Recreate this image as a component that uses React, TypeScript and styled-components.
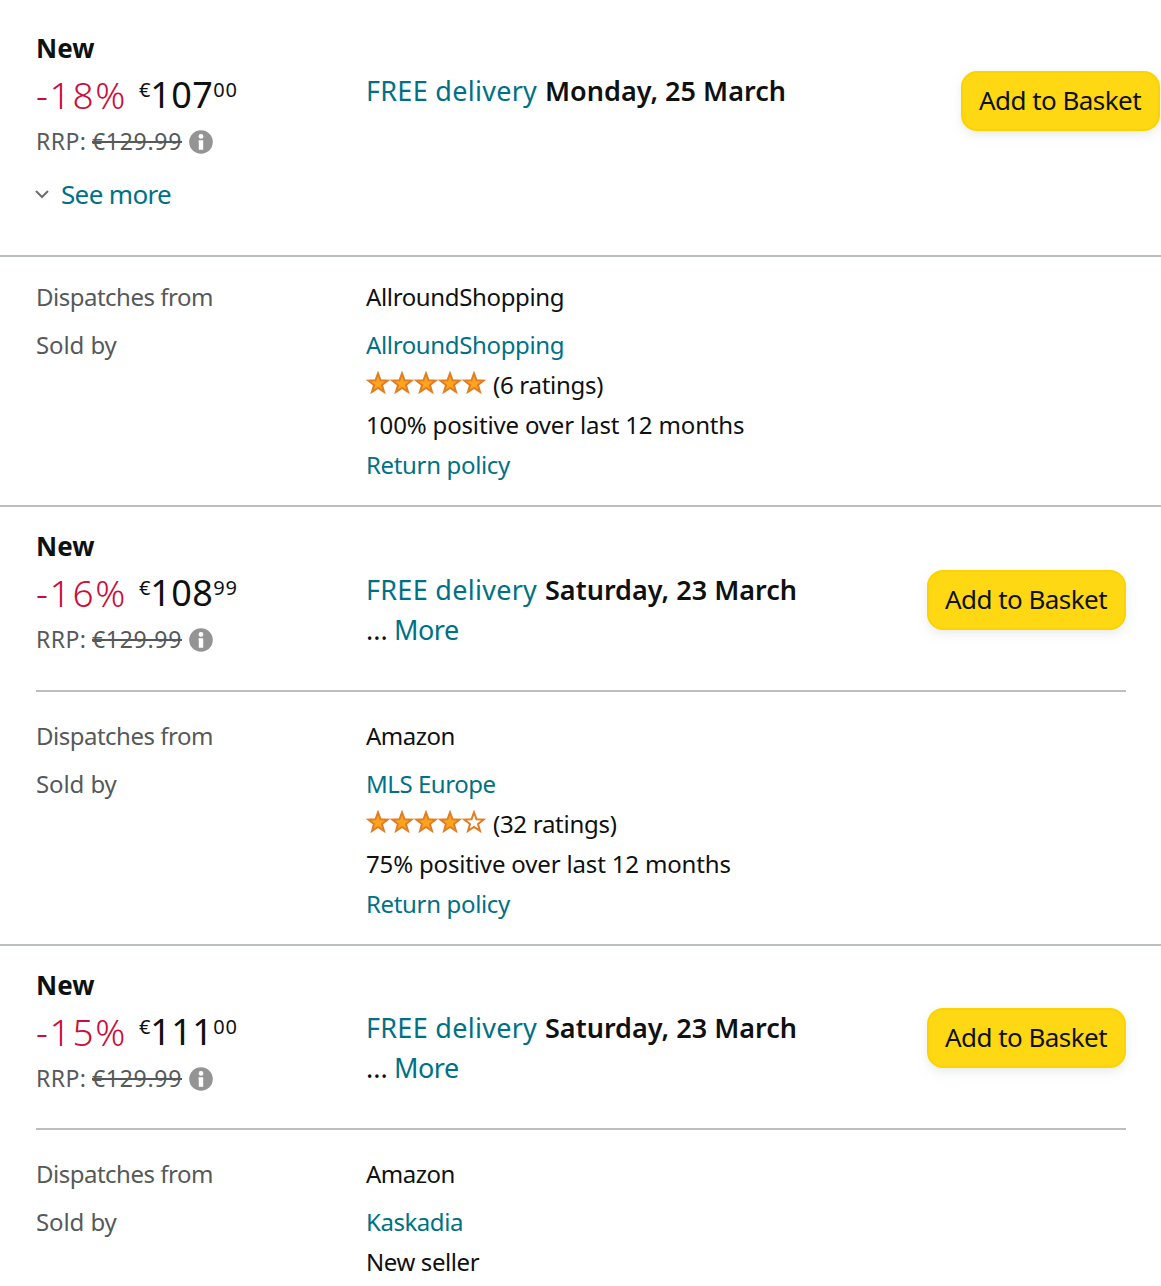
import React from 'react';
import styled, { createGlobalStyle } from 'styled-components';

const GlobalStyle = createGlobalStyle`
  * { box-sizing: border-box; }
  body {
    margin: 0;
    background: #fff;
    color: #0f1111;
    font-family: "Noto Sans", "Open Sans", sans-serif;
    overflow: hidden;
  }
`;

const Page = styled.main`
  width: 1161px;
  height: 1286px;
  overflow: hidden;
`;

const Offer = styled.section<{ $top: number }>`
  padding-top: ${p => p.$top}px;
`;

const Header = styled.div<{ $bottom: number; $wide?: boolean }>`
  display: grid;
  grid-template-columns: 330px 1fr auto;
  align-items: start;
  padding: 0 ${p => (p.$wide ? 1 : 35)}px ${p => p.$bottom}px 36px;
`;

const Rule = styled.hr<{ $inset?: boolean }>`
  height: 2px;
  border: 0;
  margin: 0 ${p => (p.$inset ? '35px 0 36px' : '0')};
  background: #bbbfbf;
`;

const Condition = styled.div`
  height: 40px;
  line-height: 40px;
  font-size: 26px;
  font-weight: 700;
`;

const PriceLine = styled.div`
  display: flex;
  height: 52px;
  line-height: 53px;
`;

const Discount = styled.span`
  width: 103px;
  font-size: 37px;
  font-weight: 300;
  letter-spacing: 1.7px;
  color: #cc0c39;
`;

const Small = styled.span`
  font-size: 20px;
  line-height: 44px;
  letter-spacing: 0.8px;
`;

const Whole = styled.span`
  margin-left: -1px;
  font-size: 36px;
  letter-spacing: 0.4px;
`;

const ListPrice = styled.div`
  display: flex;
  align-items: center;
  height: 43px;
  line-height: 43px;
  font-size: 23px;
  letter-spacing: 0.7px;
  color: #565959;
`;

const ListLabel = styled.span`
  width: 56px;
  letter-spacing: 0.4px;
`;

const Struck = styled.span`
  position: relative;
  width: 90px;
  margin-right: 7px;
  white-space: nowrap;

  &::after {
    content: "";
    position: absolute;
    left: 0;
    right: 0;
    top: 21px;
    height: 2px;
    background: #565959;
  }
`;

const SeeMore = styled.div`
  display: flex;
  align-items: center;
  gap: 12px;
  height: 40px;
  margin: 11px 0 0 -1px;
  line-height: 40px;
  font-size: 26px;
  letter-spacing: -0.65px;
  color: #007185;
`;

const Delivery = styled.div<{ $top: number }>`
  margin-top: ${p => p.$top}px;
  line-height: 40px;
  font-size: 27px;
  white-space: nowrap;
`;

const DeliveryLine = styled.div`
  display: flex;
`;

const FreeLink = styled.span`
  width: 179px;
  letter-spacing: 0.28px;
  color: #007185;
`;

const DeliveryDate = styled.span`
  font-weight: 600;
  letter-spacing: 0.02px;
`;

const Ellipsis = styled.span`
  width: 28px;
`;

const MoreLink = styled.span`
  letter-spacing: -0.5px;
  color: #007185;
`;

const BasketButton = styled.button<{ $top: number }>`
  width: 199px;
  height: 60px;
  margin-top: ${p => p.$top}px;
  padding: 0 1px 2px 0;
  border: 2px solid #fcd200;
  border-radius: 16px;
  background: #ffd814;
  box-shadow: 0 4px 10px rgba(213, 217, 217, 0.5);
  color: #0f1111;
  font-family: inherit;
  font-size: 26px;
  line-height: 54px;
  letter-spacing: -0.55px;
  white-space: nowrap;
`;

const Details = styled.div<{ $top: number }>`
  display: grid;
  grid-template-columns: 330px 1fr;
  row-gap: 8px;
  padding: ${p => p.$top}px 35px 20px 36px;
  font-size: 24px;
  line-height: 40px;
`;

const Label = styled.div<{ $track: number }>`
  height: 40px;
  letter-spacing: ${p => p.$track}px;
  color: #565959;
`;

const Line = styled.div<{ $track: number; $link?: boolean }>`
  height: 40px;
  letter-spacing: ${p => p.$track}px;
  color: ${p => (p.$link ? '#007185' : '#0f1111')};
`;

const RatingLine = styled.div`
  display: flex;
  height: 40px;
  letter-spacing: -0.28px;
`;

const StarStrip = styled.svg`
  display: block;
  width: 120px;
  height: 24px;
  margin: 6px 7px 0 0;
`;

const STAR = 'M12 2.4L14.5 9.3L21.6 9.6L16 14L18 20.9L12 17L6 20.9L8 14L2.400 9.6L9.5 9.3Z';

function Stars({ filled }: { filled: number }) {
  return (
    <StarStrip viewBox="0 0 120 24">
      {[0, 1, 2, 3, 4].map(i => (
        <path
          key={i}
          d={STAR}
          transform={`translate(${i * 24} 0)`}
          fill={i < filled ? '#ffa41c' : '#fff'}
          stroke="#e17d22"
          strokeWidth="2"
        />
      ))}
    </StarStrip>
  );
}

function InfoIcon() {
  return (
    <svg width="24" height="24" viewBox="0 0 24 24">
      <circle cx="12" cy="12" r="11.8" fill="#949494" />
      <circle cx="12" cy="6.4" r="2.4" fill="#fff" />
      <path d="M9.600 10.300h4.600v9.400h-4.400v-7.300h-.2z" fill="#fff" />
    </svg>
  );
}

function Chevron() {
  return (
    <svg width="14" height="10" viewBox="0 0 14 10">
      <path d="M1 2L7 8L13 2" fill="none" stroke="#6b6f6f" strokeWidth="2" />
    </svg>
  );
}

interface PriceProps {
  discount: string;
  whole: string;
  cents: string;
}

function Price({ discount, whole, cents }: PriceProps) {
  return (
    <>
      <Condition>New</Condition>
      <PriceLine>
        <Discount>{discount}</Discount>
        <Small>€</Small>
        <Whole>{whole}</Whole>
        <Small>{cents}</Small>
      </PriceLine>
      <ListPrice>
        <ListLabel>RRP:</ListLabel>
        <Struck>€129.99</Struck>
        <InfoIcon />
      </ListPrice>
    </>
  );
}

function DeliveryInfo({ date, top, more }: { date: string; top: number; more?: boolean }) {
  return (
    <Delivery $top={top}>
      <DeliveryLine>
        <FreeLink>FREE delivery</FreeLink>
        <DeliveryDate>{date}</DeliveryDate>
      </DeliveryLine>
      {more && (
        <DeliveryLine>
          <Ellipsis>...</Ellipsis>
          <MoreLink>More</MoreLink>
        </DeliveryLine>
      )}
    </Delivery>
  );
}

export default function App() {
  return (
    <>
      <GlobalStyle />
      <Page>
        <Offer $top={28}>
          <Header $bottom={41} $wide>
            <div>
              <Price discount="-18%" whole="107" cents="00" />
              <SeeMore>
                <Chevron />
                See more
              </SeeMore>
            </div>
            <DeliveryInfo date="Monday, 25 March" top={43} />
            <BasketButton $top={43}>Add to Basket</BasketButton>
          </Header>
          <Rule />
          <Details $top={20}>
            <Label $track={-0.5}>Dispatches from</Label>
            <Line $track={-0.36}>AllroundShopping</Line>
            <Label $track={-0.1}>Sold by</Label>
            <div>
              <Line $link $track={-0.36}>AllroundShopping</Line>
              <RatingLine>
                <Stars filled={5} />
                (6 ratings)
              </RatingLine>
              <Line $track={-0.16}>100% positive over last 12 months</Line>
              <Line $link $track={-0.34}>Return policy</Line>
            </div>
          </Details>
        </Offer>
        <Rule />
        <Offer $top={19}>
          <Header $bottom={29}>
            <div>
              <Price discount="-16%" whole="108" cents="99" />
            </div>
            <DeliveryInfo date="Saturday, 23 March" top={44} more />
            <BasketButton $top={44}>Add to Basket</BasketButton>
          </Header>
          <Rule $inset />
          <Details $top={24}>
            <Label $track={-0.5}>Dispatches from</Label>
            <Line $track={-0.5}>Amazon</Line>
            <Label $track={-0.1}>Sold by</Label>
            <div>
              <Line $link $track={-0.45}>MLS Europe</Line>
              <RatingLine>
                <Stars filled={4} />
                (32 ratings)
              </RatingLine>
              <Line $track={-0.16}>75% positive over last 12 months</Line>
              <Line $link $track={-0.34}>Return policy</Line>
            </div>
          </Details>
        </Offer>
        <Rule />
        <Offer $top={19}>
          <Header $bottom={28}>
            <div>
              <Price discount="-15%" whole="111" cents="00" />
            </div>
            <DeliveryInfo date="Saturday, 23 March" top={43} more />
            <BasketButton $top={43}>Add to Basket</BasketButton>
          </Header>
          <Rule $inset />
          <Details $top={24}>
            <Label $track={-0.5}>Dispatches from</Label>
            <Line $track={-0.5}>Amazon</Line>
            <Label $track={-0.1}>Sold by</Label>
            <div>
              <Line $link $track={-0.45}>Kaskadia</Line>
              <Line $track={-0.4}>New seller</Line>
            </div>
          </Details>
        </Offer>
      </Page>
    </>
  );
}
